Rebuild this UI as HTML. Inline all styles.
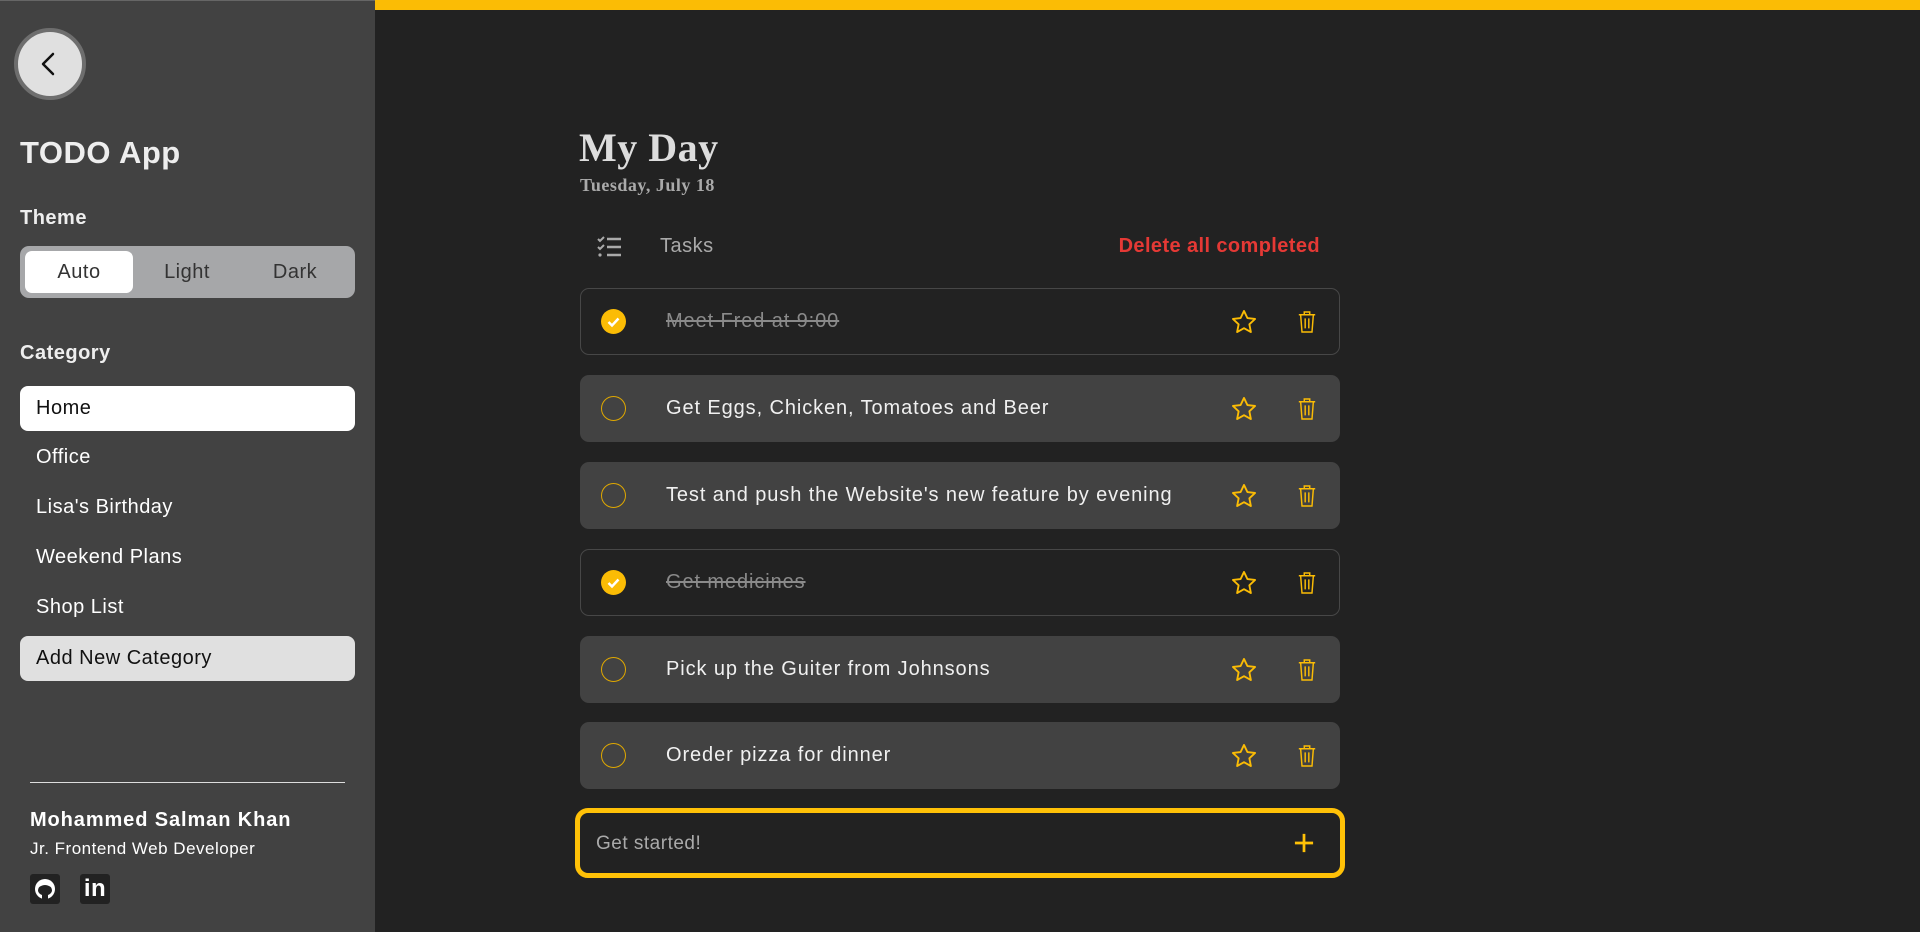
<!DOCTYPE html>
<html><head><meta charset="utf-8"><style>
*{margin:0;padding:0;box-sizing:border-box}
body{width:1920px;height:932px;background:#222;font-family:"Liberation Sans",sans-serif;position:relative;overflow:hidden;letter-spacing:0.5px}
.side{position:absolute;left:0;top:0;width:375px;height:932px;background:#424242;border-top:1px solid #666}
.abs{position:absolute}
.back{left:14px;top:27px;width:72px;height:72px;border-radius:50%;background:#e0e0e0;border:4px solid #6e6e6e}
.h{color:#eee;font-weight:bold}
.tog{left:20px;top:245px;width:335px;height:52px;background:#a6a7a9;border-radius:9px}
.tog span{position:absolute;top:0;line-height:52px;font-size:20px;color:#333;text-align:center;width:108px}
.pill{left:5px;top:5px;width:108px;height:42px;background:#fff;border-radius:7px}
.cat{left:20px;width:335px;height:45px;border-radius:8px;padding-left:16px;line-height:45px;font-size:20px;color:#fff}
.top{left:375px;top:0;width:1545px;height:10px;background:#fbbc05}
.card{position:absolute;left:580px;width:760px;height:67px;border-radius:9px;background:#424242}
.card.done{background:transparent;border:1px solid #474747}
.card .t{position:absolute;left:86px;top:0;line-height:67px;font-size:20px;color:#f0f0f0;letter-spacing:0.9px}
.card.done .t{color:#8a8a8a;text-decoration:line-through;left:85px;line-height:65px}
.card .c{position:absolute;left:21px;top:21px;width:25px;height:25px;border-radius:50%;border:1.5px solid #e0a800}
.card.done .c{background:#fbbc05;border:none;left:20px;top:20px}
.card svg.s{position:absolute;left:650px;top:20px}
.card svg.d{position:absolute;left:717px;top:21px}
.card.done svg.s{left:649px;top:19px}
.card.done svg.d{left:716px;top:20px}
</style></head><body>
<div class="side">
 <div class="abs back"><svg width="64" height="64" viewBox="0 0 64 64"><path d="M35 22 L25 32 L35 42" stroke="#111" stroke-width="2.5" fill="none" stroke-linecap="round" stroke-linejoin="round"/></svg></div>
 <div class="abs h" style="left:20px;top:134px;font-size:31px">TODO App</div>
 <div class="abs h" style="left:20px;top:206px;font-size:20px">Theme</div>
 <div class="abs tog"><div class="abs pill"></div><span style="left:5px">Auto</span><span style="left:113px">Light</span><span style="left:221px">Dark</span></div>
 <div class="abs h" style="left:20px;top:341px;font-size:20px">Category</div>
 <div class="abs cat" style="top:385px;background:#fff;color:#111">Home</div>
 <div class="abs cat" style="top:434px">Office</div>
 <div class="abs cat" style="top:484px">Lisa's Birthday</div>
 <div class="abs cat" style="top:534px">Weekend Plans</div>
 <div class="abs cat" style="top:584px">Shop List</div>
 <div class="abs cat" style="top:635px;background:#e0e0e0;color:#111">Add New Category</div>
 <div class="abs" style="left:30px;top:781px;width:315px;height:1px;background:#ddd"></div>
 <div class="abs h" style="left:30px;top:808px;font-size:20px;color:#fff;letter-spacing:0.9px">Mohammed Salman Khan</div>
 <div class="abs" style="left:30px;top:838px;font-size:17px;color:#fff">Jr. Frontend Web Developer</div>
 <div class="abs" style="left:30px;top:873px;width:30px;height:30px;background:#222;border-radius:3px"><svg width="30" height="30" viewBox="0 0 30 30"><circle cx="15" cy="15" r="10" fill="#fff"/><path d="M12 25 v-4 q-3 -1 -4 -4 q0 -4 3 -5 q4 -2 8 0 q3 1 3 5 q-1 3 -4 4 v4z" fill="#222"/></svg></div>
 <div class="abs" style="left:80px;top:873px;width:30px;height:30px;background:#222;border-radius:3px;color:#fff;font-weight:bold;font-size:24px;line-height:30px;text-align:center">in</div>
</div>
<div class="abs top"></div>
<div class="abs" style="left:579px;top:124px;font-family:'Liberation Serif',serif;font-weight:bold;font-size:40px;color:#ddd">My Day</div>
<div class="abs" style="left:580px;top:175px;font-family:'Liberation Serif',serif;font-weight:bold;font-size:18px;color:#aaa">Tuesday, July 18</div>
<svg class="abs" style="left:597px;top:235px" width="26" height="24" viewBox="0 0 26 24"><path d="M1 4 l2 2 l4-4 M1 12 l2 2 l4-4" stroke="#aaa" stroke-width="2" fill="none"/><circle cx="3" cy="20" r="1.6" fill="#aaa"/><path d="M10 4h14M10 12h14M10 20h14" stroke="#aaa" stroke-width="2.5"/></svg>
<div class="abs" style="left:660px;top:235px;font-size:20px;color:#aaa">Tasks</div>
<div class="abs" style="left:1080px;top:235px;width:240px;text-align:right;font-size:20px;font-weight:bold;color:#e53935;letter-spacing:0.4px">Delete all completed</div>

<div class="card done" style="top:288px"><div class="c"><svg width="25" height="25" viewBox="0 0 25 25"><path d="M7.5 13 l3.5 3.5 l6.5-7" stroke="#fff" stroke-width="2.5" fill="none"/></svg></div><div class="t">Meet Fred at 9:00</div>
<svg class="s" width="28" height="28" viewBox="0 0 24 24"><path d="M12 2.5l2.9 6.1 6.6.8-4.9 4.6 1.3 6.6L12 17.3 6.1 20.6l1.3-6.6L2.5 9.4l6.6-.8z" fill="none" stroke="#fbbc05" stroke-width="1.6" stroke-linejoin="round"/></svg>
<svg class="d" width="20" height="26" viewBox="0 0 22 28"><path d="M2 6h18M8 6V3h6v3M4 6l1.5 19h11L18 6M9 10v11M13 10v11" fill="none" stroke="#fbbc05" stroke-width="1.6"/></svg></div>

<div class="card" style="top:375px"><div class="c"></div><div class="t">Get Eggs, Chicken, Tomatoes and Beer</div>
<svg class="s" width="28" height="28" viewBox="0 0 24 24"><path d="M12 2.5l2.9 6.1 6.6.8-4.9 4.6 1.3 6.6L12 17.3 6.1 20.6l1.3-6.6L2.5 9.4l6.6-.8z" fill="none" stroke="#fbbc05" stroke-width="1.6" stroke-linejoin="round"/></svg>
<svg class="d" width="20" height="26" viewBox="0 0 22 28"><path d="M2 6h18M8 6V3h6v3M4 6l1.5 19h11L18 6M9 10v11M13 10v11" fill="none" stroke="#fbbc05" stroke-width="1.6"/></svg></div>

<div class="card" style="top:462px"><div class="c"></div><div class="t">Test and push the Website's new feature by evening</div>
<svg class="s" width="28" height="28" viewBox="0 0 24 24"><path d="M12 2.5l2.9 6.1 6.6.8-4.9 4.6 1.3 6.6L12 17.3 6.1 20.6l1.3-6.6L2.5 9.4l6.6-.8z" fill="none" stroke="#fbbc05" stroke-width="1.6" stroke-linejoin="round"/></svg>
<svg class="d" width="20" height="26" viewBox="0 0 22 28"><path d="M2 6h18M8 6V3h6v3M4 6l1.5 19h11L18 6M9 10v11M13 10v11" fill="none" stroke="#fbbc05" stroke-width="1.6"/></svg></div>

<div class="card done" style="top:549px"><div class="c"><svg width="25" height="25" viewBox="0 0 25 25"><path d="M7.5 13 l3.5 3.5 l6.5-7" stroke="#fff" stroke-width="2.5" fill="none"/></svg></div><div class="t">Get medicines</div>
<svg class="s" width="28" height="28" viewBox="0 0 24 24"><path d="M12 2.5l2.9 6.1 6.6.8-4.9 4.6 1.3 6.6L12 17.3 6.1 20.6l1.3-6.6L2.5 9.4l6.6-.8z" fill="none" stroke="#fbbc05" stroke-width="1.6" stroke-linejoin="round"/></svg>
<svg class="d" width="20" height="26" viewBox="0 0 22 28"><path d="M2 6h18M8 6V3h6v3M4 6l1.5 19h11L18 6M9 10v11M13 10v11" fill="none" stroke="#fbbc05" stroke-width="1.6"/></svg></div>

<div class="card" style="top:636px"><div class="c"></div><div class="t">Pick up the Guiter from Johnsons</div>
<svg class="s" width="28" height="28" viewBox="0 0 24 24"><path d="M12 2.5l2.9 6.1 6.6.8-4.9 4.6 1.3 6.6L12 17.3 6.1 20.6l1.3-6.6L2.5 9.4l6.6-.8z" fill="none" stroke="#fbbc05" stroke-width="1.6" stroke-linejoin="round"/></svg>
<svg class="d" width="20" height="26" viewBox="0 0 22 28"><path d="M2 6h18M8 6V3h6v3M4 6l1.5 19h11L18 6M9 10v11M13 10v11" fill="none" stroke="#fbbc05" stroke-width="1.6"/></svg></div>

<div class="card" style="top:722px"><div class="c"></div><div class="t">Oreder pizza for dinner</div>
<svg class="s" width="28" height="28" viewBox="0 0 24 24"><path d="M12 2.5l2.9 6.1 6.6.8-4.9 4.6 1.3 6.6L12 17.3 6.1 20.6l1.3-6.6L2.5 9.4l6.6-.8z" fill="none" stroke="#fbbc05" stroke-width="1.6" stroke-linejoin="round"/></svg>
<svg class="d" width="20" height="26" viewBox="0 0 22 28"><path d="M2 6h18M8 6V3h6v3M4 6l1.5 19h11L18 6M9 10v11M13 10v11" fill="none" stroke="#fbbc05" stroke-width="1.6"/></svg></div>

<div class="abs" style="left:575px;top:808px;width:770px;height:70px;border:5px solid #ffc107;border-radius:13px">
 <div class="abs" style="left:16px;top:1px;line-height:60px;font-size:19px;color:#aaa">Get started!</div>
 <svg class="abs" style="left:714px;top:20px" width="20" height="20" viewBox="0 0 22 22"><path d="M11 1v20M1 11h20" stroke="#ffc107" stroke-width="3"/></svg>
</div>
</body></html>
